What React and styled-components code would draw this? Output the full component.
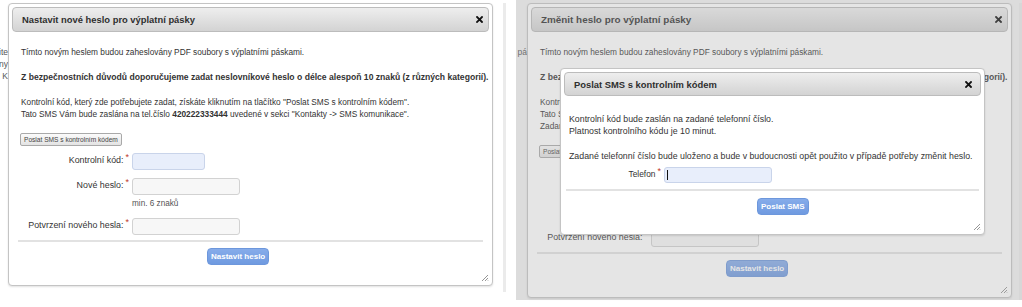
import styled, { createGlobalStyle } from "styled-components";

const GlobalStyle = createGlobalStyle`
  html, body { margin: 0; padding: 0; background: #fff; }
  body {
    font-family: "Liberation Sans", Arial, sans-serif;
    color: #333;
  }
`;

const Page = styled.div`
  display: flex;
  width: 1022px;
  height: 307px;
  overflow: hidden;
`;

const Shot = styled.div`
  position: relative;
  display: flex;
  align-items: flex-start;
  width: ${(p) => p.$w}px;
  height: ${(p) => p.$h}px;
  padding-top: 3px;
  box-sizing: border-box;
  background: ${(p) => p.$bg || "#fff"};
  flex-shrink: 0;
`;

const Gutter = styled.div`
  width: ${(p) => p.$w}px;
  flex-shrink: 0;
  overflow: hidden;
  align-self: stretch;
  display: flex;
  flex-direction: column;
  align-items: flex-end;
  padding-top: 43px;
  font-size: 8.5px;
  line-height: 12px;
  color: #555;
  white-space: nowrap;
  border-right: ${(p) => (p.$line ? "3px solid #ebebeb" : "none")};
  box-sizing: border-box;
`;

const Overlay = styled.div`
  position: absolute;
  inset: 0;
  background: rgba(170, 170, 170, 0.3);
`;

const DialogBox = styled.div`
  position: ${(p) => (p.$floating ? "absolute" : "relative")};
  left: ${(p) => (p.$floating ? `${p.$x}px` : "auto")};
  top: ${(p) => (p.$floating ? `${p.$y}px` : "auto")};
  width: ${(p) => p.$w}px;
  box-sizing: border-box;
  flex-shrink: 0;
  padding: 3px 3px ${(p) => p.$bottom}px;
  background: #fff;
  border: 1px solid #c4c4c4;
  border-radius: 4px;
  box-shadow: 0 1px 2px rgba(0, 0, 0, 0.12);
`;

const TitleBar = styled.div`
  display: flex;
  align-items: center;
  justify-content: space-between;
  height: ${(p) => p.$h}px;
  padding: 0 ${(p) => p.$closeGap}px 0 9px;
  box-sizing: border-box;
  border: 1px solid #bcbcbc;
  border-radius: 4px;
  background: linear-gradient(#eeeeee, #d3d3d3);
  color: #2f2f2f;
  font-weight: bold;
  font-size: ${(p) => p.$size}px;
`;

const Close = styled.svg`
  width: 7px;
  height: 7px;
`;

const Body = styled.div`
  padding: ${(p) => p.$top}px ${(p) => p.$side}px 0;
  font-size: ${(p) => p.$size}px;
  line-height: 12px;
`;

const Para = styled.p`
  margin: 0 0 ${(p) => p.$gap ?? 13}px;
  font-weight: ${(p) => (p.$bold ? "bold" : "normal")};
  font-size: ${(p) => (p.$bold ? "8.6px" : "inherit")};
  white-space: nowrap;
`;

const SmallButton = styled.button`
  display: block;
  height: 13px;
  padding: 0 3px;
  margin: 0 0 7px -1px;
  font-family: inherit;
  font-size: 6.6px;
  color: #444;
  border: 1px solid #a9a9a9;
  border-radius: 2px;
  background: linear-gradient(#fbfbfb, #e3e3e3);
`;

const Row = styled.div`
  display: flex;
  align-items: center;
  margin-bottom: ${(p) => p.$gap ?? 8}px;
`;

const Label = styled.div`
  width: ${(p) => p.$w}px;
  text-align: right;
  font-size: ${(p) => p.$size || 8.9}px;
  padding-bottom: 3px;
  flex-shrink: 0;
  white-space: nowrap;
`;

const Star = styled.sup`
  color: #c0392b;
  font-size: 9px;
  margin-left: 2px;
  vertical-align: 3px;
  line-height: 0;
`;

const Field = styled.div`
  display: flex;
  align-items: center;
  width: ${(p) => p.$w}px;
  height: ${(p) => p.$h || 17}px;
  margin-left: 3px;
  padding-left: 2px;
  box-sizing: border-box;
  border: 1px solid ${(p) => (p.$blue ? "#c9d4ea" : "#d2d2d2")};
  border-radius: 3px;
  background: ${(p) => (p.$blue ? "#e8eefb" : "#f7f7f7")};
`;

const Caret = styled.span`
  width: 1px;
  height: 10px;
  background: #111;
`;

const Hint = styled.div`
  margin: -5px 0 8px ${(p) => p.$indent}px;
  font-size: 8.2px;
  line-height: 12px;
  color: #555;
`;

const Rule = styled.div`
  height: 2px;
  margin: 0 -3px;
  background: #e2e2e2;
`;

const Footer = styled.div`
  display: flex;
  padding-top: ${(p) => p.$top}px;
  padding-left: ${(p) => p.$indent}px;
`;

const BlueButton = styled.button`
  height: 17px;
  padding: 0 3px;
  font-family: inherit;
  font-size: 8px;
  font-weight: bold;
  color: #fff;
  border: 1px solid #6d97dc;
  border-radius: 4px;
  background: linear-gradient(#86acea, #6f9ae0);
`;

const Grip = styled.svg`
  position: absolute;
  right: 3px;
  bottom: 3px;
  width: 8px;
  height: 8px;
`;

const CloseIcon = () => (
  <Close viewBox="0 0 7 7">
    <path d="M1 1 L6 6 M6 1 L1 6" stroke="#111" strokeWidth="1.8" strokeLinecap="square" />
  </Close>
);

const GripIcon = () => (
  <Grip viewBox="0 0 8 8">
    <path d="M7 1 L1 7 M7 4 L4 7 M7 6.5 L6.5 7" stroke="#8a8a8a" strokeWidth="0.9" />
  </Grip>
);

const Dialog = ({
  title,
  titleSize = 9.4,
  textSize = 8.3,
  closeGap = 5,
  w,
  titleH = 25,
  top,
  side,
  bottom,
  floating,
  x,
  y,
  children,
}) => (
  <DialogBox $w={w} $bottom={bottom} $floating={floating} $x={x} $y={y}>
    <TitleBar $h={titleH} $size={titleSize} $closeGap={closeGap}>
      <span>{title}</span>
      <CloseIcon />
    </TitleBar>
    <Body $top={top} $side={side} $size={textSize}>
      {children}
    </Body>
    <GripIcon />
  </DialogBox>
);

const PasswordForm = ({ extra }) => (
  <>
    <Para>Tímto novým heslem budou zaheslovány PDF soubory s výplatními páskami.</Para>
    <Para $bold>
      Z bezpečnostních důvodů doporučujeme zadat neslovníkové heslo o délce alespoň 10 znaků (z
      různých kategorií).
    </Para>
    <Para>
      Kontrolní kód, který zde potřebujete zadat, získáte kliknutím na tlačítko "Poslat SMS s
      kontrolním kódem".
      <br />
      Tato SMS Vám bude zaslána na tel.číslo <b>420222333444</b> uvedené v sekci "Kontakty -&gt; SMS
      komunikace".
      {extra && (
        <>
          <br />
          {extra}
        </>
      )}
    </Para>
    <SmallButton>Poslat SMS s kontrolním kódem</SmallButton>
    <Row>
      <Label $w={108}>
        Kontrolní kód:<Star>*</Star>
      </Label>
      <Field $w={73} $blue />
    </Row>
    <Row>
      <Label $w={108}>
        Nové heslo:<Star>*</Star>
      </Label>
      <Field $w={108} />
    </Row>
    <Hint $indent={111}>min. 6 znaků</Hint>
    <Row $gap={5}>
      <Label $w={108}>
        Potvrzení nového hesla:<Star>*</Star>
      </Label>
      <Field $w={108} />
    </Row>
    <Rule />
    <Footer $top={6} $indent={186}>
      <BlueButton>Nastavit heslo</BlueButton>
    </Footer>
  </>
);

export default function App() {
  return (
    <Page>
      <GlobalStyle />
      <Shot $w={516} $h={292}>
        <Gutter $w={8}>
          <span>ite</span>
          <span>ny</span>
          <span>K</span>
        </Gutter>
        <Dialog title="Nastavit nové heslo pro výplatní pásky" w={485} top={14} side={9} bottom={20}>
          <PasswordForm />
        </Dialog>
        <Gutter $w={13} $line />
      </Shot>
      <Shot $w={506} $h={300} $bg="#f2f2f2">
        <Gutter $w={11}>
          <span>pá</span>
        </Gutter>
        <Dialog
          title="Změnit heslo pro výplatní pásky"
          titleSize={9.9}
          w={485}
          top={14}
          side={9}
          bottom={20}
        >
          <PasswordForm extra="Zadané telefonní číslo bude použito pro zaslání kontrolního kódu." />
        </Dialog>
        <Gutter $w={10} $line />
        <Overlay />
        <Dialog
          title="Poslat SMS s kontrolním kódem"
          textSize={8.8}
          closeGap={8}
          w={425}
          titleH={24}
          top={17}
          side={5}
          bottom={19}
          floating
          x={44}
          y={68}
        >
          <Para>
            Kontrolní kód bude zaslán na zadané telefonní číslo.
            <br />
            Platnost kontrolního kódu je 10 minut.
          </Para>
          <Para $gap={5}>
            Zadané telefonní číslo bude uloženo a bude v budoucnosti opět použito v případě potřeby
            změnit heslo.
          </Para>
          <Row $gap={6}>
            <Label $w={92} $size={8.4}>
              Telefon<Star>*</Star>
            </Label>
            <Field $w={108} $h={16} $blue>
              <Caret />
            </Field>
          </Row>
          <Rule />
          <Footer $top={7} $indent={188}>
            <BlueButton>Poslat SMS</BlueButton>
          </Footer>
        </Dialog>
      </Shot>
    </Page>
  );
}
